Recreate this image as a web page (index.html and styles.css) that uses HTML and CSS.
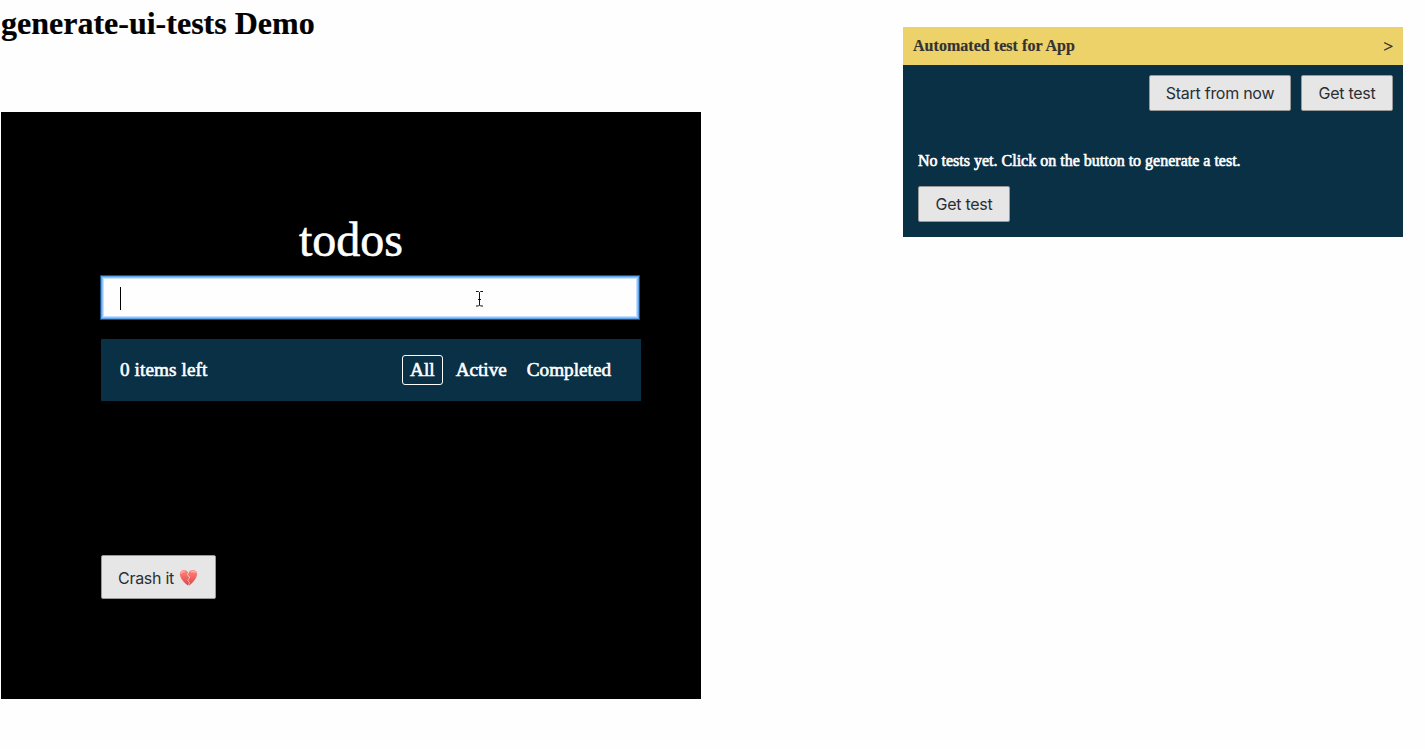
FILE: index.html
```html
<!DOCTYPE html>
<html lang="en">
<head>
<meta charset="utf-8">
<title>generate-ui-tests Demo</title>
<link rel="stylesheet" href="styles.css">
</head>
<body>
<main class="demo">
  <h1 class="page-title">generate-ui-tests Demo</h1>
  <section class="app">
    <h2 class="app-title">todos</h2>
    <div class="new-todo"><span class="caret"></span>
      <svg class="pointer" width="9" height="17" viewBox="0 0 9 17" fill="none" stroke="#111" stroke-width="1"><path d="M1 1.500H3.500L4.500 2.500L5.500 1.500H8M1 16H3.500L4.500 15L5.500 16H8M4.500 2.500V15M3 9.500H6"/></svg>
    </div>
    <footer class="footer">
      <span class="count">0 items left</span>
      <nav class="filters">
        <a class="filter selected">All</a>
        <a class="filter">Active</a>
        <a class="filter">Completed</a>
      </nav>
    </footer>
    <button class="button crash"><span class="label">Crash it</span>
      <svg class="heart" width="19" height="18" viewBox="0 0 20 18">
        <defs><linearGradient id="red" x1="0" y1="0" x2="0" y2="1"><stop offset="0" stop-color="#f98a84"/><stop offset=".5" stop-color="#f4625e"/><stop offset="1" stop-color="#d5484a"/></linearGradient></defs>
        <path d="M9.500 3.200C8 .8 5.800.2 3.800.8C1.200 1.600.3 4.500 1.400 7.500C2.700 11 6 14.500 9.700 17.200L10.600 13.800L8.800 11.300L10.900 8.400L8.500 5.700Z" fill="url(#red)"/>
        <path d="M10.200 3.200C11.500.9 14 .2 16.200.8C19 1.700 19.600 4.600 18.500 7.500C17.200 11 14 14.700 10.300 17.200L11.300 13.700L9.500 11.300L11.700 8.300L9.200 5.600Z" fill="url(#red)"/>
        <path d="M2.500 4C2.900 2.600 4.200 2 5.500 2.300M13 2.700C14.500 1.800 16 2 17 3.200" fill="none" stroke="#ffb5ae" stroke-width="1.200" stroke-linecap="round"/>
      </svg>
    </button>
  </section>
</main>
<aside class="panel">
  <header class="panel-header"><strong class="panel-title">Automated test for App</strong><span class="toggle">&gt;</span></header>
  <div class="toolbar">
    <button class="button start"><span class="label">Start from now</span></button>
    <button class="button get"><span class="label">Get test</span></button>
  </div>
  <div class="panel-body">
    <p class="message">No tests yet. Click on the button to generate a test.</p>
    <button class="button get"><span class="label">Get test</span></button>
  </div>
</aside>
</body>
</html>
```
FILE: styles.css
```css
* { box-sizing: border-box; }
body {
  margin: 0;
  padding: 0 22px 0 1px;
  display: flex;
  justify-content: space-between;
  align-items: flex-start;
  background: #fefefe;
  color: #000;
  font: 16px/18px "Liberation Serif", "Times New Roman", serif;
}
.demo { width: 700px; }
.page-title { margin: 5px 0 70px; font-size: 32px; line-height: 37px; -webkit-text-stroke: .2px #000; }
.app { height: 587px; padding: 100px 60px 0 100px; background: #000; color: #fff; }
.app-title {
  width: 500px;
  margin: 0;
  text-align: center;
  font-size: 48px;
  font-weight: 400;
  line-height: 56px;
  -webkit-text-stroke: .6px #fff;
}
.new-todo {
  position: relative;
  display: flex;
  align-items: center;
  width: 536px;
  height: 41px;
  margin: 9px 0 21px 1px;
  padding: 2px 0 0 17px;
  background: #fefefe;
  border: 1px solid #90c3fb;
  box-shadow: 0 0 0 1px #5ea4ec, 0 0 0 2px #195084, inset 0 0 0 1px #c6e0fd;
}
.caret { width: 1px; height: 23px; background: #000; }
.pointer { position: absolute; left: 372px; top: 12px; }
.footer {
  display: flex;
  justify-content: space-between;
  align-items: center;
  width: 540px;
  height: 62px;
  padding: 0 23px 0 19px;
  background: #0a3045;
  font-size: 19.2px;
  line-height: 22px;
  -webkit-text-stroke: .6px #fff;
}
.count { letter-spacing: .1px; }
.filters { display: flex; gap: 6px; }
.filter { padding: 3px 6px; border: 1px solid transparent; border-radius: 3px; }
.filter.selected { padding: 3px 7px; border-color: #fff; }
.button {
  display: flex;
  justify-content: center;
  align-items: center;
  height: 36px;
  padding: 0;
  border: 1px solid #999;
  border-radius: 2px;
  background: #e6e6e6;
  color: #2b2f33;
  font: 16px/18px Inter, "Liberation Sans", sans-serif;
  letter-spacing: -.27px;
}
.crash { width: 115px; height: 44px; margin-top: 154px; padding: 2px 1px 0 0; gap: 5px; }
.start { width: 142px; }
.get { width: 92px; }
.panel { width: 500px; height: 210px; margin-top: 27px; background: #0a3045; color: #fff; }
.panel-header {
  display: flex;
  justify-content: space-between;
  align-items: center;
  height: 38px;
  padding: 0 10px;
  background: #edd269;
  color: #333;
}
.panel-title { letter-spacing: .04px; -webkit-text-stroke: .2px #333; }
.toggle { padding-top: 1px; font-size: 17px; -webkit-text-stroke: .5px #333; }
.toolbar { display: flex; justify-content: flex-end; gap: 10px; padding: 10px 10px 0; }
.panel-body { padding: 41px 15px 0; }
.message { margin: 0 0 16px; -webkit-text-stroke: .6px #fff; }
```
